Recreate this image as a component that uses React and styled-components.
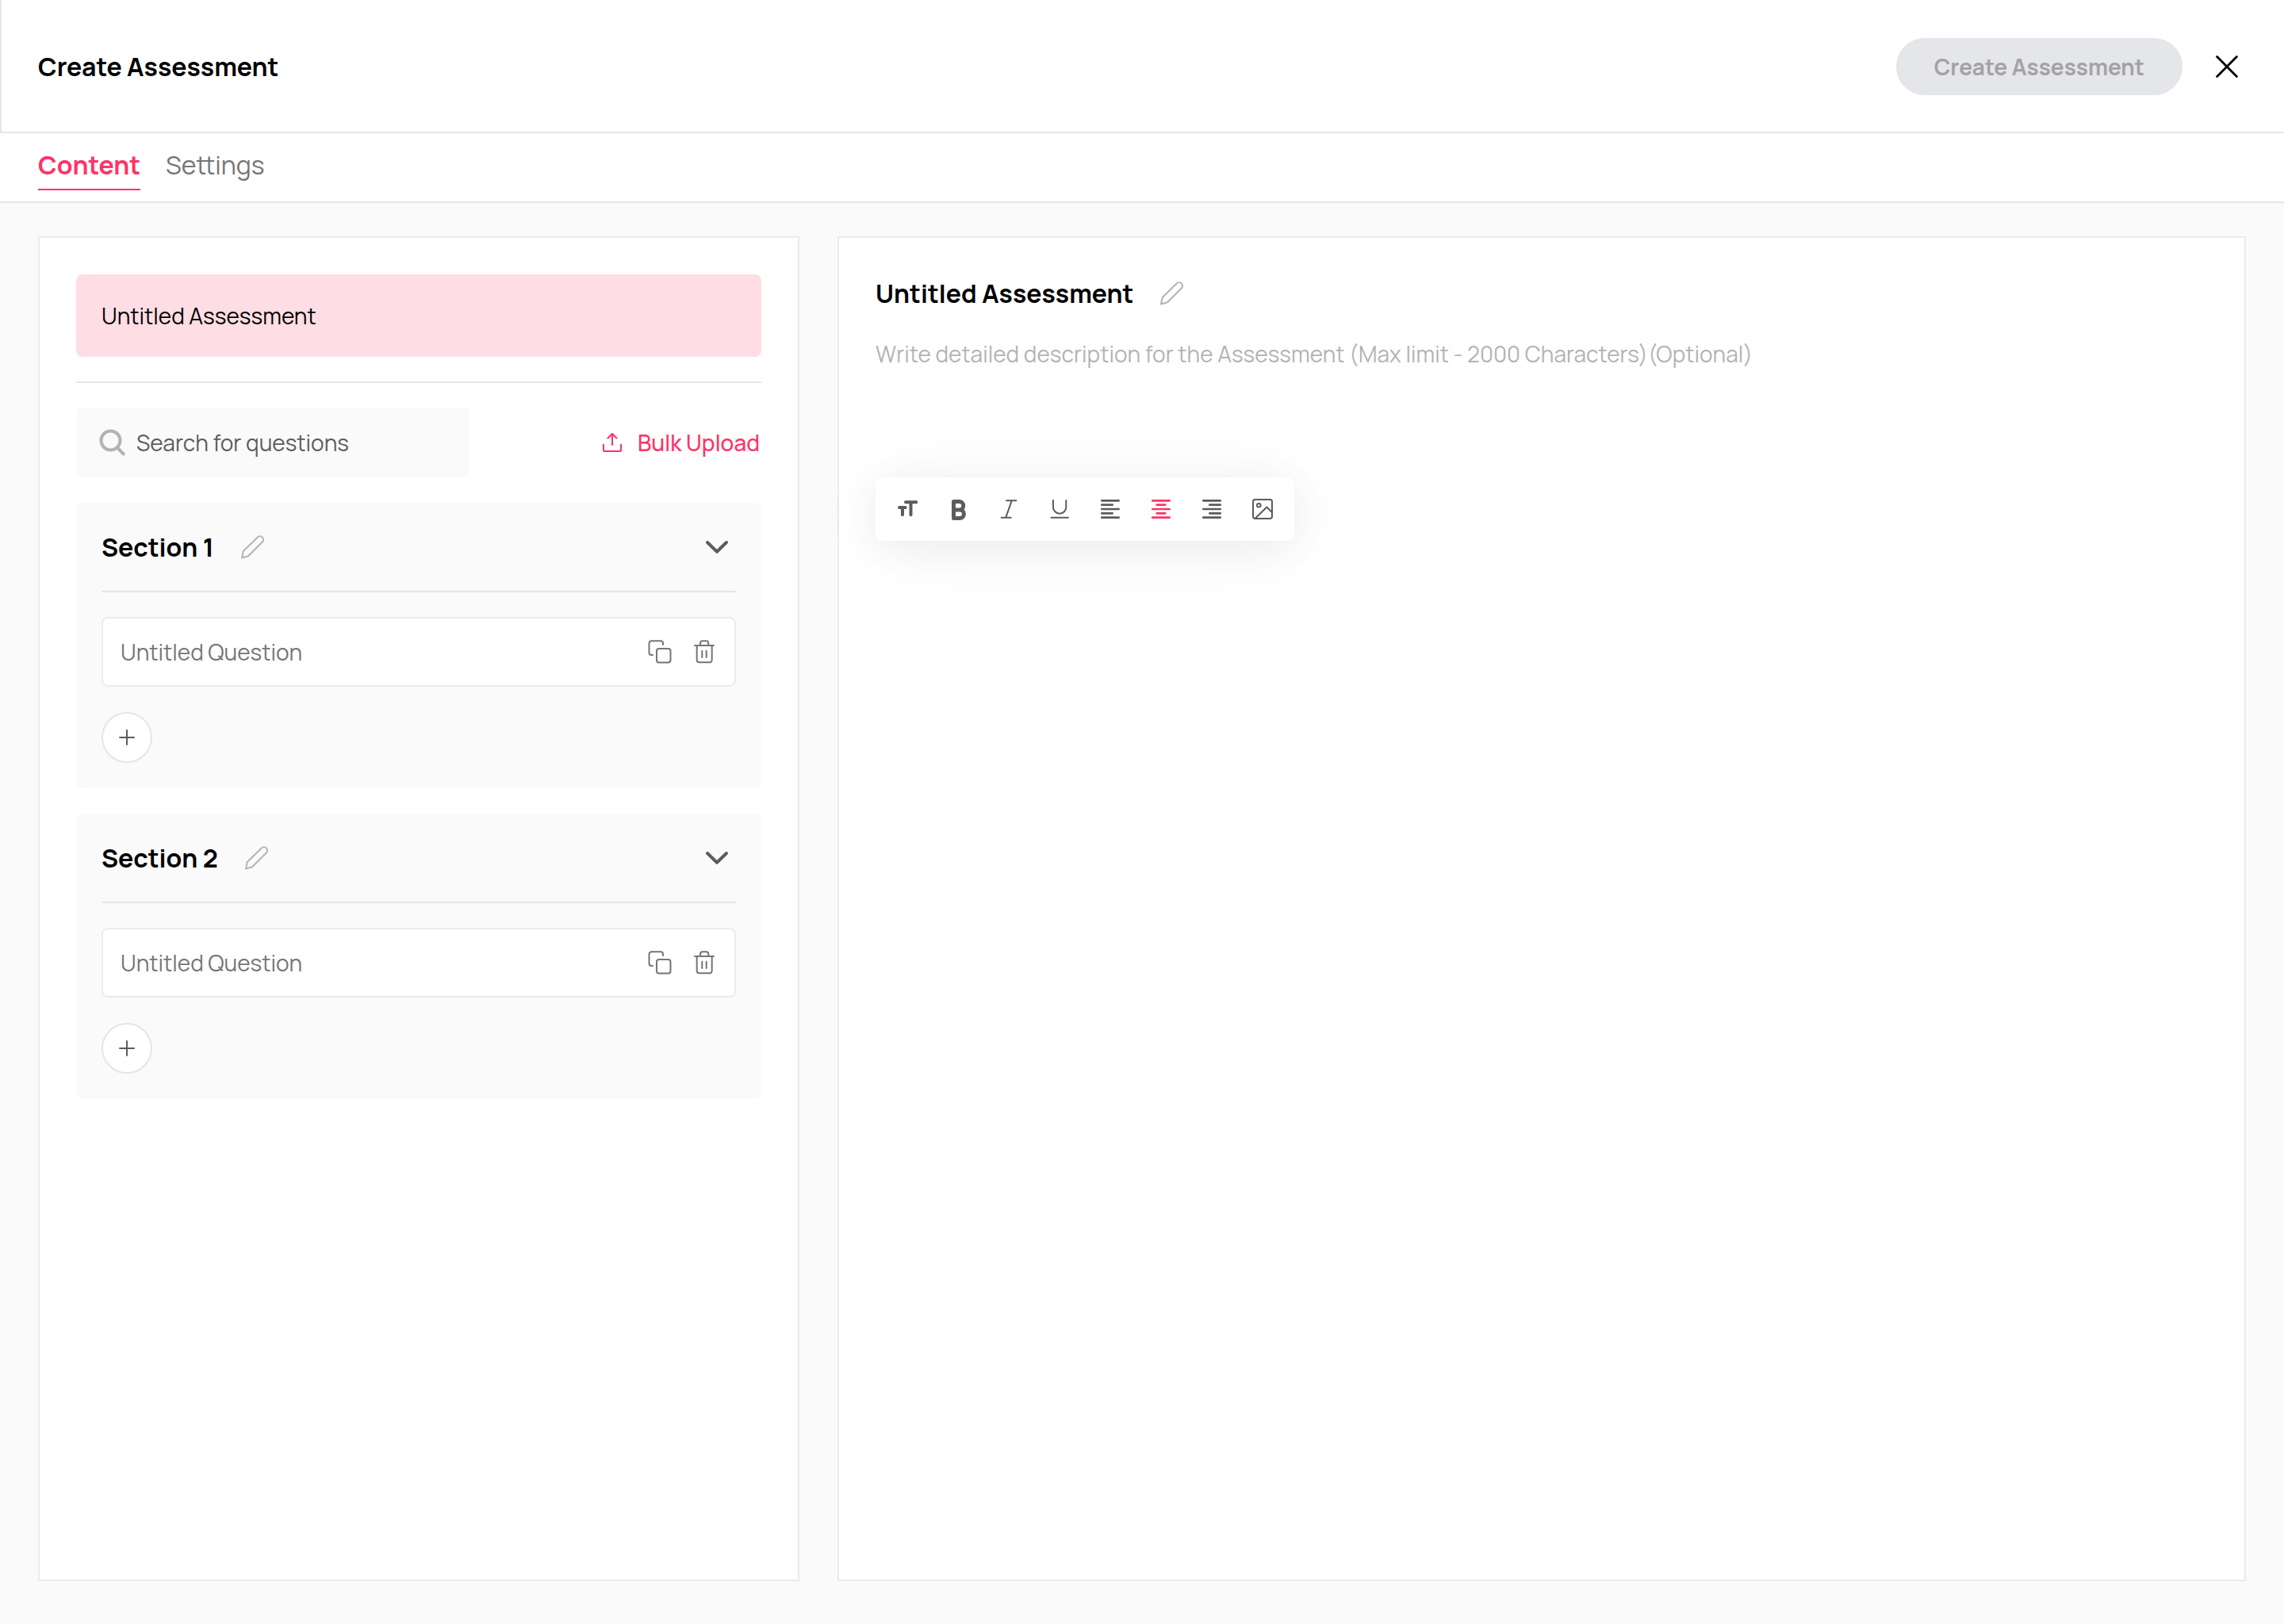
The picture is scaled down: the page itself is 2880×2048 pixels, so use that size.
import React, { useState } from "react";
import styled, { createGlobalStyle, css } from "styled-components";

const color = {
  pink: "#ff3366",
  pinkTint: "#ffdde4",
  black: "#000000",
  dark: "#5c5c5c",
  grey: "#757575",
  muted: "#b3b3b3",
  line: "#e5e5e5",
  panelLine: "#ebebeb",
  surface: "#fafafa",
};

const GlobalStyle = createGlobalStyle`
  *, *::before, *::after { box-sizing: border-box; }
  html, body, #root { height: 100%; }
  body {
    margin: 0;
    background: ${color.surface};
    color: ${color.black};
    font-family: Manrope, Inter, "Open Sans", sans-serif;
    font-size: 28px;
    line-height: 40px;
  }
  button, input, textarea { font: inherit; color: inherit; }
  h1, h2, h3, p, ul { margin: 0; padding: 0; }
`;

const Page = styled.div`
  min-height: 100%;
  display: flex;
  flex-direction: column;
`;

const Header = styled.header`
  display: flex;
  align-items: center;
  justify-content: space-between;
  padding: 48px 48px 46px 46px;
  background: #fff;
  border-left: 2px solid ${color.line};
  border-bottom: 2px solid ${color.line};
`;

const Title = styled.h1`
  font-size: 32px;
  line-height: 48px;
  font-weight: 700;
`;

const HeaderActions = styled.div`
  display: flex;
  align-items: center;
  gap: 32px;
`;

const PillButton = styled.button`
  height: 72px;
  padding: 0 46px;
  border: 2px solid ${color.line};
  border-radius: 36px;
  background: #e5e6ea;
  color: #a3a3a3;
  font-weight: 700;
`;

const IconButton = styled.button`
  display: flex;
  padding: 0;
  border: 0;
  background: none;
  color: ${(p) => p.$color || color.grey};
  cursor: pointer;
`;

const Tabs = styled.nav`
  display: flex;
  gap: 32px;
  padding: 16px 48px 14px;
  background: #fff;
  border-bottom: 2px solid ${color.line};
`;

const Tab = styled.button`
  padding: 0 0 6px;
  border: 0;
  border-bottom: 2px solid transparent;
  background: none;
  font-size: 32px;
  line-height: 48px;
  font-weight: 400;
  color: ${color.grey};
  cursor: pointer;
  ${(p) =>
    p.$active &&
    css`
      border-color: ${color.pink};
      color: ${color.pink};
      font-weight: 700;
    `}
`;

const Workspace = styled.main`
  flex: 1;
  display: grid;
  grid-template-columns: minmax(0, 960fr) minmax(0, 1776fr);
  gap: 48px;
  padding: 42px 48px 54px;
`;

const Panel = styled.section`
  padding: 46px;
  background: #fff;
  border: 2px solid ${color.panelLine};
`;

const AssessmentItem = styled.button`
  display: block;
  width: 100%;
  padding: 32px;
  border: 0;
  border-radius: 8px;
  background: ${color.pinkTint};
  text-align: left;
  cursor: pointer;
`;

const Divider = styled.hr`
  height: 2px;
  margin: 31px 0;
  border: 0;
  background: ${color.line};
`;

const SearchRow = styled.div`
  display: flex;
  align-items: center;
  justify-content: space-between;
`;

const SearchField = styled.label`
  display: flex;
  align-items: center;
  gap: 12px;
  width: 496px;
  height: 88px;
  padding: 0 24px 0 28px;
  border-radius: 8px;
  background: ${color.surface};
  color: ${color.muted};
`;

const SearchInput = styled.input`
  flex: 1;
  min-width: 0;
  padding: 0;
  border: 0;
  outline: 0;
  background: none;
  &::placeholder {
    color: ${color.dark};
    opacity: 1;
  }
`;

const UploadButton = styled.button`
  display: flex;
  align-items: center;
  gap: 16px;
  padding: 0 2px;
  border: 0;
  background: none;
  color: ${color.pink};
  font-weight: 500;
  cursor: pointer;
`;

const SectionCard = styled.section`
  margin-top: 32px;
  padding: 32px;
  border-radius: 8px;
  background: ${color.surface};
`;

const SectionHeader = styled.div`
  display: flex;
  align-items: center;
  justify-content: space-between;
`;

const Heading = styled.div`
  display: flex;
  align-items: center;
  gap: 32px;
`;

const HeadingText = styled.h2`
  font-size: 32px;
  line-height: 48px;
  font-weight: 700;
`;

const Question = styled.div`
  display: flex;
  align-items: center;
  justify-content: space-between;
  height: 88px;
  padding: 0 22px;
  border: 2px solid ${color.panelLine};
  border-radius: 8px;
  background: #fff;
  color: ${color.grey};
`;

const QuestionActions = styled.div`
  display: flex;
  gap: 24px;
`;

const AddButton = styled.button`
  display: flex;
  align-items: center;
  justify-content: center;
  width: 64px;
  height: 64px;
  margin-top: 32px;
  padding: 0;
  border: 2px solid ${color.line};
  border-radius: 50%;
  background: #fff;
  color: ${color.dark};
  cursor: pointer;
`;

const Description = styled.textarea`
  display: block;
  width: 100%;
  height: 144px;
  margin-top: 32px;
  padding: 0;
  border: 0;
  outline: 0;
  resize: none;
  background: none;
  &::placeholder {
    color: ${color.muted};
    opacity: 1;
  }
`;

const Toolbar = styled.div`
  display: inline-flex;
  align-items: center;
  gap: 32px;
  height: 80px;
  margin-top: 32px;
  padding: 0 24px;
  border-radius: 8px;
  background: #fff;
  box-shadow:
    0 8px 48px rgba(0, 0, 0, 0.05),
    4px 8px 96px rgba(0, 0, 0, 0.05);
`;

const Icon = ({ size = 32, width = 2, children }) => (
  <svg
    width={size}
    height={size}
    viewBox={`0 0 ${size} ${size}`}
    fill="none"
    stroke="currentColor"
    strokeWidth={width}
    strokeLinecap="round"
    strokeLinejoin="round"
    aria-hidden="true"
  >
    {children}
  </svg>
);

const CloseIcon = () => (
  <Icon size={48} width={2.8}>
    <path d="M11.6 11.6 36.4 36.4M36.4 11.6 11.6 36.4" />
  </Icon>
);

const SearchIcon = () => (
  <Icon size={36} width={4}>
    <circle cx="15.5" cy="15.500" r="12" />
    <path d="m24.300 25 7.400 7.500" />
  </Icon>
);

const UploadIcon = () => (
  <Icon>
    <path d="M5 18.500V26a1 1 0 0 0 1 1h20a1 1 0 0 0 1-1v-7.500M16 19V5M10.500 10.500 16 5l5.500 5.500" />
  </Icon>
);

const PencilIcon = () => (
  <Icon>
    <path d="M3 29.500 4.800 21 22.800 3.500a4.200 4.200 0 0 1 6 6L11 27.300Z" />
  </Icon>
);

const ChevronIcon = () => (
  <Icon size={48} width={4}>
    <path d="M12 18 24 29.700 36 18" />
  </Icon>
);

const CopyIcon = () => (
  <Icon>
    <rect x="12" y="12" width="17.5" height="17.5" rx="3" />
    <path d="M7 20H5.500a3 3 0 0 1-3-3V5.300a3 3 0 0 1 3-3H17a3 3 0 0 1 3 3V7" />
  </Icon>
);

const TrashIcon = () => (
  <Icon>
    <path d="M4 8h24M6.700 8v18.300a3 3 0 0 0 3 3h13a3 3 0 0 0 3-3V8M11 8V5.300a3 3 0 0 1 3-3h4.300a3 3 0 0 1 3 3V8M13.300 14.700v8.300M18.700 14.700v8.300" />
  </Icon>
);

const PlusIcon = () => (
  <Icon>
    <path d="M16 7v18M7 16h18" />
  </Icon>
);

const TextSizeIcon = () => (
  <Icon width={4}>
    <path d="M14 7.300h13.300M20.500 7.300v16M6 14h7.700M10 14v9.300" />
  </Icon>
);

const BoldIcon = () => (
  <Icon width={5}>
    <path d="M10.500 6.500h7a5.250 5.250 0 0 1 0 10.500h-7zM10.500 17h7.700a5.250 5.250 0 0 1 0 10.500h-7.700z" />
  </Icon>
);

const ItalicIcon = () => (
  <Icon>
    <path d="M13 5.300h12.300M6.700 26.700h12M19.700 5.300l-7.400 21.400" />
  </Icon>
);

const UnderlineIcon = () => (
  <Icon>
    <path d="M8 5v8.500a8.150 8.150 0 0 0 16.300 0V5M5.500 26.700h21.500" />
  </Icon>
);

const AlignIcon = ({ from, to }) => (
  <Icon width={2.7}>
    <path
      d={`M5.300 5.300h21.400M${from} 10.700H${to}M5.300 16h21.400M${from} 21.300H${to}M5.300 26.700h21.400`}
    />
  </Icon>
);

const ImageIcon = () => (
  <Icon>
    <rect x="4" y="4" width="24" height="24" rx="2.700" />
    <circle cx="11.3" cy="11.3" r="2.300" />
    <path d="M7 27.500 21.300 13.500l6.700 6.700" />
  </Icon>
);

const tools = [
  { id: "size", label: "Text size", icon: <TextSizeIcon /> },
  { id: "bold", label: "Bold", icon: <BoldIcon /> },
  { id: "italic", label: "Italic", icon: <ItalicIcon /> },
  { id: "underline", label: "Underline", icon: <UnderlineIcon /> },
  { id: "left", label: "Align left", icon: <AlignIcon from={5.3} to={18.7} /> },
  { id: "center", label: "Align center", icon: <AlignIcon from={10.7} to={21.3} /> },
  { id: "right", label: "Align right", icon: <AlignIcon from={13.3} to={26.7} /> },
  { id: "image", label: "Insert image", icon: <ImageIcon /> },
];

const sections = ["Section 1", "Section 2"];

function QuestionSection({ name }) {
  return (
    <SectionCard>
      <SectionHeader>
        <Heading>
          <HeadingText>{name}</HeadingText>
          <IconButton $color={color.muted} aria-label={`Rename ${name}`}>
            <PencilIcon />
          </IconButton>
        </Heading>
        <IconButton $color={color.dark} aria-label={`Collapse ${name}`}>
          <ChevronIcon />
        </IconButton>
      </SectionHeader>
      <Divider />
      <Question>
        <span>Untitled Question</span>
        <QuestionActions>
          <IconButton aria-label="Duplicate question">
            <CopyIcon />
          </IconButton>
          <IconButton aria-label="Delete question">
            <TrashIcon />
          </IconButton>
        </QuestionActions>
      </Question>
      <AddButton aria-label="Add question">
        <PlusIcon />
      </AddButton>
    </SectionCard>
  );
}

export default function App() {
  const [tab, setTab] = useState("Content");
  const [tool, setTool] = useState("center");

  return (
    <Page>
      <GlobalStyle />
      <Header>
        <Title>Create Assessment</Title>
        <HeaderActions>
          <PillButton disabled>Create Assessment</PillButton>
          <IconButton $color={color.black} aria-label="Close">
            <CloseIcon />
          </IconButton>
        </HeaderActions>
      </Header>
      <Tabs>
        {["Content", "Settings"].map((name) => (
          <Tab key={name} $active={tab === name} onClick={() => setTab(name)}>
            {name}
          </Tab>
        ))}
      </Tabs>
      <Workspace>
        <Panel>
          <AssessmentItem>Untitled Assessment</AssessmentItem>
          <Divider />
          <SearchRow>
            <SearchField>
              <SearchIcon />
              <SearchInput aria-label="Search for questions" placeholder="Search for questions" />
            </SearchField>
            <UploadButton>
              <UploadIcon />
              Bulk Upload
            </UploadButton>
          </SearchRow>
          {sections.map((name) => (
            <QuestionSection key={name} name={name} />
          ))}
        </Panel>
        <Panel>
          <Heading>
            <HeadingText>Untitled Assessment</HeadingText>
            <IconButton $color={color.muted} aria-label="Rename assessment">
              <PencilIcon />
            </IconButton>
          </Heading>
          <Description
            aria-label="Assessment description"
            placeholder="Write detailed description for the Assessment (Max limit - 2000 Characters)(Optional)"
          />
          <Toolbar role="toolbar" aria-label="Text formatting">
            {tools.map((t) => (
              <IconButton
                key={t.id}
                aria-label={t.label}
                $color={tool === t.id ? color.pink : color.dark}
                onClick={() => setTool(t.id)}
              >
                {t.icon}
              </IconButton>
            ))}
          </Toolbar>
        </Panel>
      </Workspace>
    </Page>
  );
}
